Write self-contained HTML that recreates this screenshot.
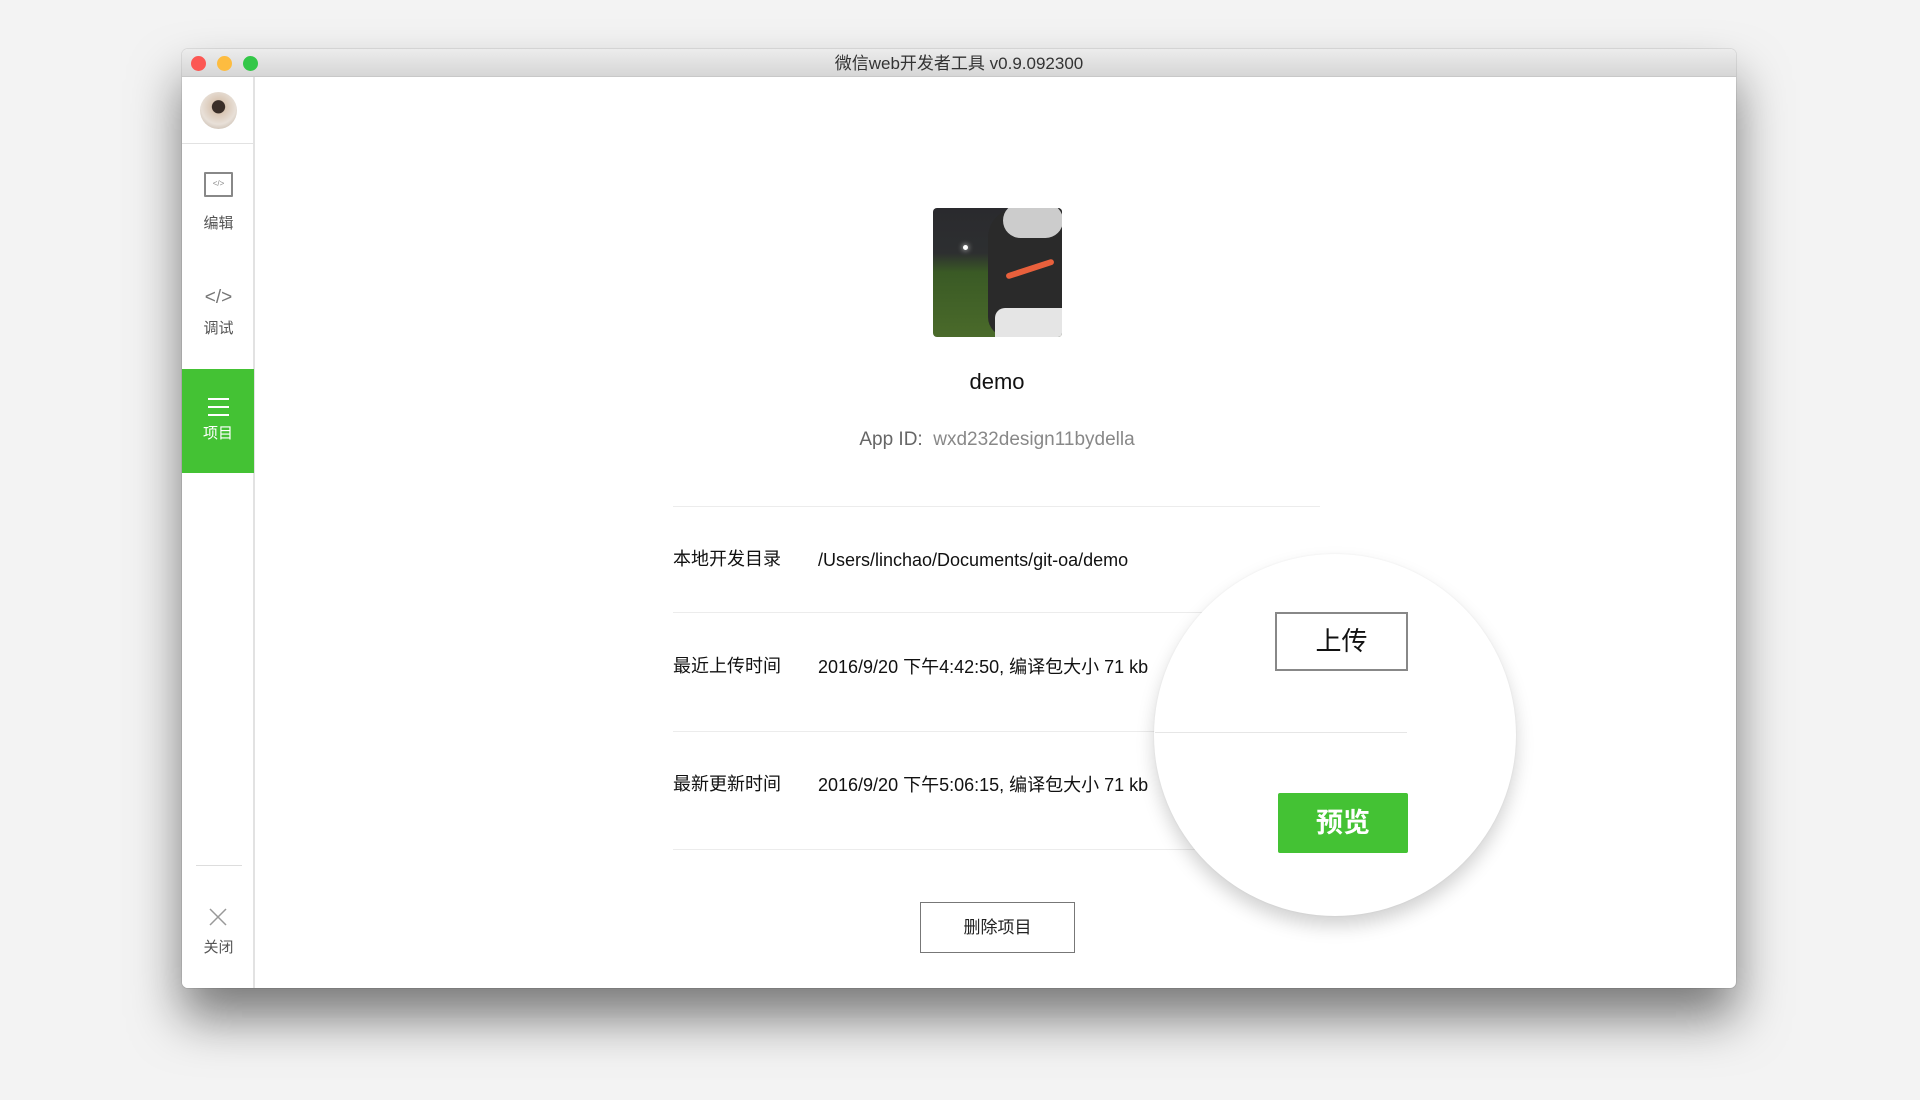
<!DOCTYPE html>
<html><head><meta charset="utf-8"><style>
*{margin:0;padding:0;box-sizing:border-box}
body{width:1920px;height:1100px;background:#f3f3f3;position:relative;overflow:hidden;font-family:"Liberation Sans","Noto Sans CJK SC",sans-serif}
.win{position:absolute;left:182px;top:49px;width:1554px;height:939px;background:#fff;border-radius:6px;box-shadow:0 30px 50px rgba(0,0,0,.5),0 0 0 1px rgba(0,0,0,.08);overflow:hidden}
.title{position:absolute;left:0;top:0;width:100%;height:28px;background:linear-gradient(#ececec,#d6d6d6);border-bottom:1px solid #c8c8c8;text-align:center;font-size:17px;line-height:30px;color:#333}
.dot{position:absolute;top:7px;width:15px;height:15px;border-radius:50%}
.side{position:absolute;left:0;top:28px;width:73px;bottom:0;background:#fff;border-right:2px solid #e2e2e2}
.abs{position:absolute}
.lbl{position:absolute;width:73px;text-align:center;font-size:15px;color:#555}
.row{position:absolute;left:491px;font-size:18px;line-height:22px;color:#111}
.hl{position:absolute;height:1px;background:#ececec}
</style></head><body>
<div class="win">
<div class="title">微信web开发者工具 v0.9.092300
<div class="dot" style="left:9px;background:#fc5753"></div>
<div class="dot" style="left:35px;background:#fdbc40"></div>
<div class="dot" style="left:61px;background:#33c748"></div>
</div>
<div class="side">
<div class="abs" style="left:18px;top:15px;width:37px;height:37px;border-radius:50%;background:radial-gradient(circle at 50% 40%,#3a2e28 0 22%,#d9c6b4 24%,#e8e0d8 60%,#b8a898 100%)"></div>
<div class="hl" style="left:0;top:66px;width:73px;background:#e2e2e2"></div>
<div class="abs" style="left:22px;top:95px;width:29px;height:25px;border:2px solid #888;border-radius:1px;font-size:8px;color:#888;text-align:center;line-height:20px">&lt;/&gt;</div>
<div class="lbl" style="top:135px">编辑</div>
<div class="lbl" style="top:210px;font-size:19px;color:#777">&lt;/&gt;</div>
<div class="lbl" style="top:240px">调试</div>
<div class="abs" style="left:0;top:292px;width:72px;height:104px;background:#44c234">
<div class="abs" style="left:26px;top:29px;width:21px;height:2px;background:#fff;box-shadow:0 8px 0 #fff,0 16px 0 #fff"></div>
<div class="lbl" style="top:53px;color:#fff;width:72px">项目</div>
</div>
<div class="hl" style="left:14px;top:788px;width:46px;background:#ddd"></div>
<svg class="abs" style="left:27px;top:831px" width="18" height="18"><path d="M1 1L17 17M17 1L1 17" stroke="#999" stroke-width="1.5"/></svg>
<div class="lbl" style="top:859px">关闭</div>
</div>
<div class="abs" style="left:751px;top:159px;width:129px;height:129px;border-radius:4px;background:linear-gradient(180deg,#2a2a2e 0%,#2d2f30 35%,#3a5a25 50%,#4a6a2a 100%);overflow:hidden">
<div class="abs" style="left:55px;top:0;width:74px;height:129px;background:#2a2a2a;border-radius:30px 0 0 20px"></div>
<div class="abs" style="left:70px;top:-5px;width:60px;height:35px;background:#ccc;border-radius:20px"></div>
<div class="abs" style="left:62px;top:100px;width:67px;height:29px;background:#e5e5e5;border-radius:10px 0 0 0"></div>
<div class="abs" style="left:72px;top:58px;width:50px;height:6px;background:#e8603c;transform:rotate(-18deg);border-radius:3px"></div>
<div class="abs" style="left:30px;top:37px;width:5px;height:5px;background:#fff;border-radius:50%;box-shadow:0 0 6px #fff"></div>
</div>
<div class="abs" style="left:615px;top:320px;width:400px;text-align:center;font-size:22px;color:#111">demo</div>
<div class="abs" style="left:515px;top:380px;width:600px;text-align:center;font-size:19px;color:#888"><span style="color:#666">App ID:</span>&nbsp; wxd232design11bydella</div>
<div class="hl" style="left:491px;top:457px;width:647px"></div>
<div class="row" style="top:499px">本地开发目录</div><div class="row" style="left:636px;top:500px">/Users/linchao/Documents/git-oa/demo</div>
<div class="hl" style="left:491px;top:563px;width:647px"></div>
<div class="row" style="top:606px">最近上传时间</div><div class="row" style="left:636px;top:607px">2016/9/20 下午4:42:50, 编译包大小 71 kb</div>
<div class="hl" style="left:491px;top:682px;width:647px"></div>
<div class="row" style="top:724px">最新更新时间</div><div class="row" style="left:636px;top:725px">2016/9/20 下午5:06:15, 编译包大小 71 kb</div>
<div class="hl" style="left:491px;top:800px;width:647px"></div>
<div class="abs" style="left:738px;top:853px;width:155px;height:51px;border:1px solid #777;text-align:center;line-height:49px;font-size:17px;color:#222">删除项目</div>
<div class="abs" style="left:972px;top:505px;width:362px;height:362px;border-radius:50%;background:#fff;box-shadow:0 10px 18px rgba(0,0,0,.18),0 0 2px rgba(0,0,0,.06)"></div>
<div class="hl" style="left:973px;top:683px;width:252px;background:#e6e6e6"></div>
<div class="abs" style="left:1093px;top:563px;width:133px;height:59px;border:2px solid #888;text-align:center;line-height:55px;font-size:26px;color:#111">上传</div>
<div class="abs" style="left:1096px;top:744px;width:130px;height:60px;background:#44c234;text-align:center;line-height:60px;font-size:27px;font-weight:bold;color:#fff;border-radius:2px">预览</div>
</div>
</body></html>
